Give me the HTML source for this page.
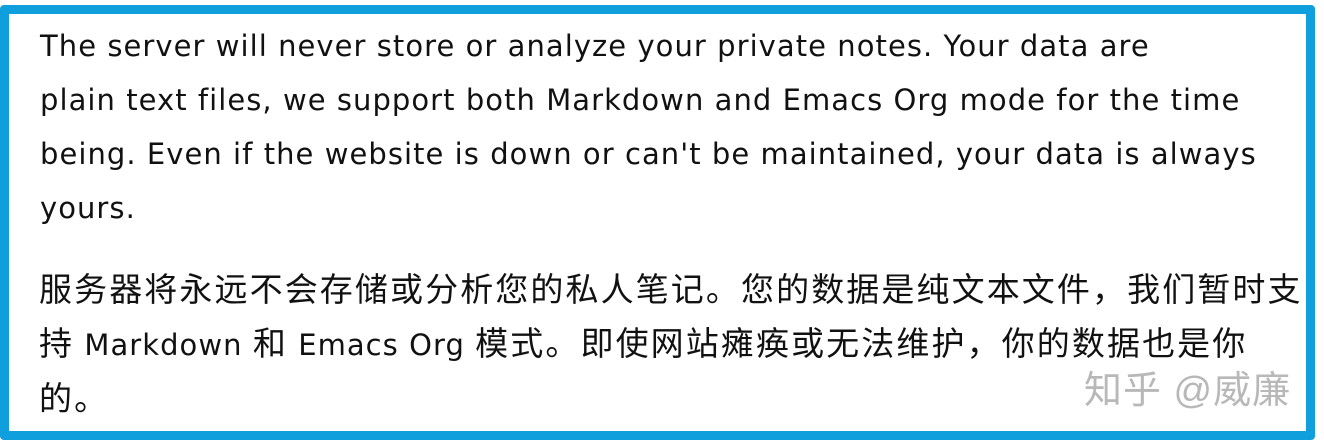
<!DOCTYPE html>
<html><head><meta charset="utf-8"><style>
html,body{margin:0;padding:0;width:1324px;height:444px;background:#fff;overflow:hidden}
.box{position:absolute;left:0;top:5px;width:1297px;height:417px;border:9px solid #0f9fdc;border-radius:4px;background:#fff}
.t{position:absolute;left:40px;font-family:"DejaVu Sans","Noto Sans CJK SC",sans-serif;font-size:29px;letter-spacing:1.05px;color:#111;white-space:nowrap;line-height:54px}
.c{position:absolute;left:39px;font-family:"DejaVu Sans","Noto Sans CJK SC",sans-serif;font-size:33px;letter-spacing:2.1px;color:#111;white-space:nowrap;line-height:54px}
.c span{font-size:29px;letter-spacing:1.05px}
.wm{position:absolute;left:1084px;top:359px;font-family:"Liberation Sans","Noto Sans CJK SC",sans-serif;font-size:38px;color:#b8b8b8;white-space:nowrap;letter-spacing:1px}
</style></head><body>
<div class="box"></div>
<div class="t" style="top:19px">The server will never store or analyze your private notes. Your data are<br>plain text files, we support both Markdown and Emacs Org mode for the time<br>being. Even if the website is down or can't be maintained, your data is always<br>yours.</div>
<div class="c" style="top:263px">服务器将永远不会存储或分析您的私人笔记。您的数据是纯文本文件，我们暂时支<br>持<span> Markdown </span>和<span> Emacs Org </span>模式。即使网站瘫痪或无法维护，你的数据也是你<br>的。</div>
<div class="wm">知乎 @威廉</div>
</body></html>
